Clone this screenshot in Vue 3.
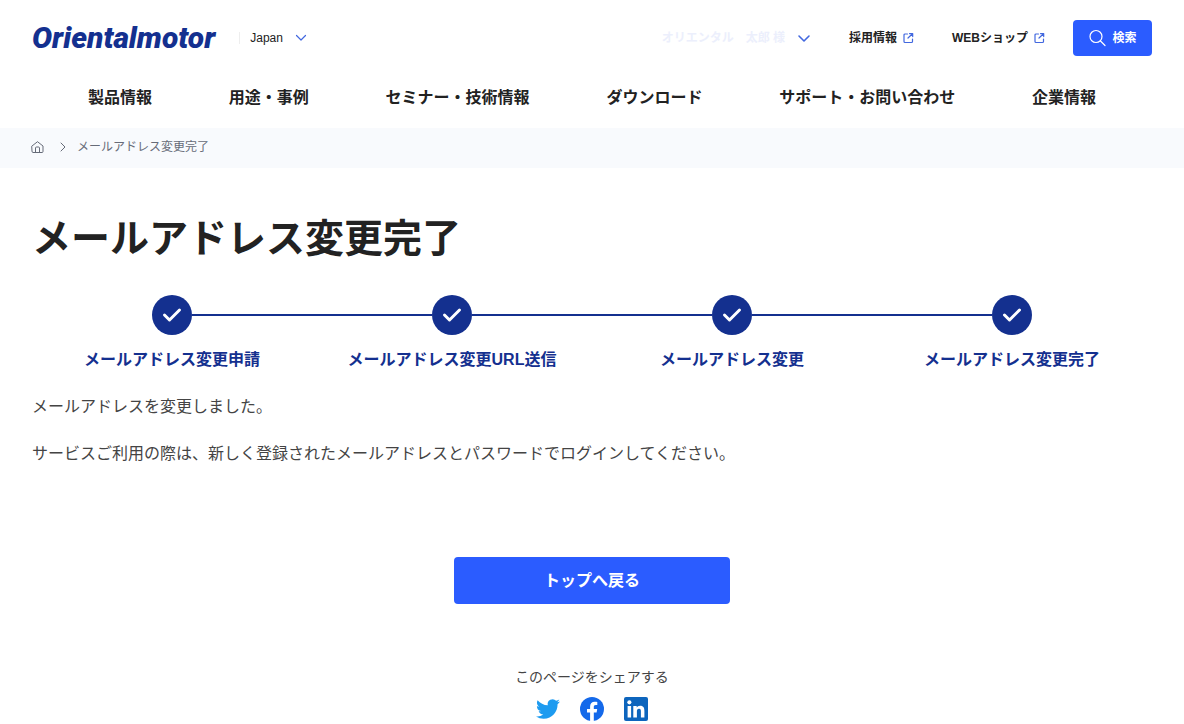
<script setup>
const nav = ['製品情報', '用途・事例', 'セミナー・技術情報', 'ダウンロード', 'サポート・お問い合わせ', '企業情報']
const utilities = ['採用情報', 'WEBショップ']
const steps = ['メールアドレス変更申請', 'メールアドレス変更URL送信', 'メールアドレス変更', 'メールアドレス変更完了']
</script>

<template>
  <div class="page">
    <header class="header">
      <div class="top">
        <a class="logo" href="#">Orientalmotor</a>
        <button class="region" type="button">
          Japan
          <svg width="12" height="8" viewBox="0 0 12 8"><path d="M1.5 1.5 6 6l4.500-4.500" /></svg>
        </button>
        <button class="account" type="button">
          <span class="account-name">オリエンタル　太郎 様</span>
          <svg width="14" height="10" viewBox="0 0 14 10"><path d="M2 3l5 5 5-5" /></svg>
        </button>
        <a v-for="item in utilities" :key="item" class="utility" href="#">
          {{ item }}
          <svg width="11" height="11" viewBox="0 0 11 11"><path d="M4.500 1H2a1 1 0 0 0-1 1V8.500a1 1 0 0 0 1 1h6.500a1 1 0 0 0 1-1V6M6.500 .6H9.700v3M9.500 .8 5 5" /></svg>
        </a>
        <button class="search" type="button">
          <svg width="18" height="18" viewBox="0 0 18 18"><circle cx="8" cy="7.500" r="6" /><path d="m12.500 12 4.500 4.500" /></svg>
          検索
        </button>
      </div>
      <nav class="nav">
        <a v-for="item in nav" :key="item" href="#">{{ item }}</a>
      </nav>
    </header>

    <nav class="breadcrumb" aria-label="パンくず">
      <a class="home" href="#" aria-label="ホーム">
        <svg width="13" height="13" viewBox="0 0 13 13"><path d="M1 5 6.500 .7 12 5V10.500a1 1 0 0 1-1 1H2a1 1 0 0 1-1-1ZM4.500 11.500V7a1 1 0 0 1 1-1h2a1 1 0 0 1 1 1v4.500" /></svg>
      </a>
      <svg class="separator" width="6" height="10" viewBox="0 0 6 10"><path d="m1 1 4 4-4 4" /></svg>
      <span>メールアドレス変更完了</span>
    </nav>

    <main class="main">
      <h1>メールアドレス変更完了</h1>
      <ol class="steps">
        <li v-for="step in steps" :key="step">
          <span class="mark">
            <svg width="20" height="16" viewBox="0 0 20 16"><path d="m2.500 8 5 5L17.500 3" /></svg>
          </span>
          <span class="label">{{ step }}</span>
        </li>
      </ol>
      <p>メールアドレスを変更しました。</p>
      <p>サービスご利用の際は、新しく登録されたメールアドレスとパスワードでログインしてください。</p>
      <a class="back" href="#">トップへ戻る</a>
    </main>

    <footer class="share">
      <span>このページをシェアする</span>
      <div class="social">
        <a href="#" aria-label="Twitter">
          <svg width="24" height="24" viewBox="0 0 24 24"><path fill="#1d9bf0" d="M23.950 4.570a10 10 0 0 1-2.820.770 4.960 4.960 0 0 0 2.160-2.720c-.950.550-2.010.950-3.130 1.180a4.920 4.920 0 0 0-8.380 4.480C7.690 8.100 4.070 6.130 1.640 3.160a4.820 4.820 0 0 0-.670 2.480c0 1.710.870 3.210 2.190 4.100a4.900 4.900 0 0 1-2.230-.620v.060a4.920 4.920 0 0 0 3.950 4.830 5 5 0 0 1-2.210.080 4.940 4.940 0 0 0 4.600 3.420A9.870 9.870 0 0 1 0 19.540a13.990 13.990 0 0 0 7.550 2.210c9.050 0 14-7.500 14-13.980 0-.210 0-.420-.020-.630a9.940 9.940 0 0 0 2.420-2.570Z" /></svg>
        </a>
        <a href="#" aria-label="Facebook">
          <svg width="24" height="24" viewBox="0 0 24 24"><circle cx="12" cy="12" r="12" fill="#1469ea" /><path fill="#fff" d="M10.100 24v-8.500H7V12h3.100V9.400c0-3 1.800-4.700 4.500-4.700 1.300 0 2.700.2 2.700.2v3h-1.500c-1.500 0-2 .9-2 1.900V12h3.400l-.600 3.500h-2.800V24Z" /></svg>
        </a>
        <a href="#" aria-label="LinkedIn">
          <svg width="24" height="24" viewBox="0 0 24 24"><rect width="24" height="24" rx="2" fill="#0d65bd" /><path fill="#fff" d="M3.600 9h3.500v11.400H3.600ZM9.300 9h3.400v1.600c.5-.9 1.700-1.900 3.400-1.900 3.600 0 4.300 2.400 4.300 5.400v6.300h-3.500v-5.600c0-1.300 0-3-1.900-3s-2.100 1.400-2.100 2.900v5.700H9.300Z" /><circle cx="5.350" cy="5.350" r="2.050" fill="#fff" /></svg>
        </a>
      </div>
    </footer>
  </div>
</template>

<style>
body {
  margin: 0;
  background: #fff;
}
</style>

<style scoped>
.page {
  color: #222;
  font-family: "Liberation Sans", "Noto Sans CJK JP", sans-serif;
  font-size: 16px;
  line-height: 24px;
}
a {
  color: inherit;
  text-decoration: none;
}
button {
  border: 0;
  padding: 0;
  background: none;
  color: inherit;
  font: inherit;
  display: flex;
  align-items: center;
}
svg {
  display: block;
  flex: none;
  fill: none;
  stroke-linecap: round;
  stroke-linejoin: round;
}
.social svg {
  stroke: none;
}
.top {
  display: flex;
  align-items: center;
  height: 36px;
  padding: 20px 32px 0;
  font-size: 12px;
  font-weight: 700;
}
.logo {
  color: #14308f;
  font-family: Roboto, "Liberation Sans", sans-serif;
  font-size: 30px;
  font-style: italic;
  font-weight: 900;
  line-height: 36px;
}
.region {
  margin-left: 24px;
  padding-left: 10px;
  gap: 12px;
  height: 12px;
  border-left: 1px solid #eee;
  font-weight: 400;
}
.region svg,
.account svg,
.utility svg {
  stroke: #4268df;
  stroke-width: 1.2;
}
.account {
  margin-left: auto;
  gap: 12px;
}
.account svg {
  stroke-width: 1.6;
}
.account-name {
  color: #eceffc;
}
.utility {
  display: flex;
  align-items: center;
  gap: 6px;
  margin-left: 38px;
}
.search {
  justify-content: center;
  gap: 6px;
  width: 79px;
  height: 36px;
  margin-left: 28px;
  border-radius: 4px;
  background: #2b5cff;
  color: #fff;
}
.search svg {
  stroke: #fff;
  stroke-width: 1.2;
}
.nav {
  display: flex;
  justify-content: space-between;
  padding: 30px 88px 18px;
  font-weight: 700;
}
.breadcrumb {
  display: flex;
  align-items: center;
  height: 38px;
  padding: 0 31px 2px;
  background: #f8fafd;
  color: #666b78;
  font-size: 12px;
}
.breadcrumb svg {
  stroke: #666b78;
}
.separator {
  margin: 0 11px 0 16px;
}
.main {
  display: flex;
  flex-direction: column;
  padding: 43px 32px 0;
}
h1 {
  margin: 0 0 28px;
  font-size: 39px;
  line-height: 56px;
}
.steps {
  display: grid;
  grid-template-columns: repeat(4, 1fr);
  margin: 0 0 23px;
  padding: 0;
  list-style: none;
  color: #14308f;
  font-weight: 700;
}
.steps li {
  display: grid;
  grid-template-columns: 1fr 40px 1fr;
  align-items: center;
  row-gap: 13px;
}
.steps li::before,
.steps li::after {
  content: "";
  grid-row: 1;
  height: 2px;
  background: #14308f;
}
.steps li::before {
  grid-column: 1;
}
.steps li::after {
  grid-column: 3;
}
.steps li:first-child::before,
.steps li:last-child::after {
  visibility: hidden;
}
.mark {
  grid-row: 1;
  grid-column: 2;
  display: grid;
  place-items: center;
  height: 40px;
  border-radius: 50%;
  background: #14308f;
}
.mark svg {
  stroke: #fff;
  stroke-width: 3;
}
.label {
  grid-row: 2;
  grid-column: 1 / -1;
  text-align: center;
}
p {
  margin: 0 0 23px;
  color: #444;
}
.back {
  align-self: center;
  width: 276px;
  margin-top: 68px;
  border-radius: 4px;
  background: #2b5cff;
  color: #fff;
  font-weight: 700;
  line-height: 47px;
  text-align: center;
}
.share {
  display: flex;
  flex-direction: column;
  align-items: center;
  gap: 8px;
  padding-top: 61px;
  color: #444;
  font-size: 14px;
}
.social {
  display: flex;
  gap: 20px;
}
</style>
